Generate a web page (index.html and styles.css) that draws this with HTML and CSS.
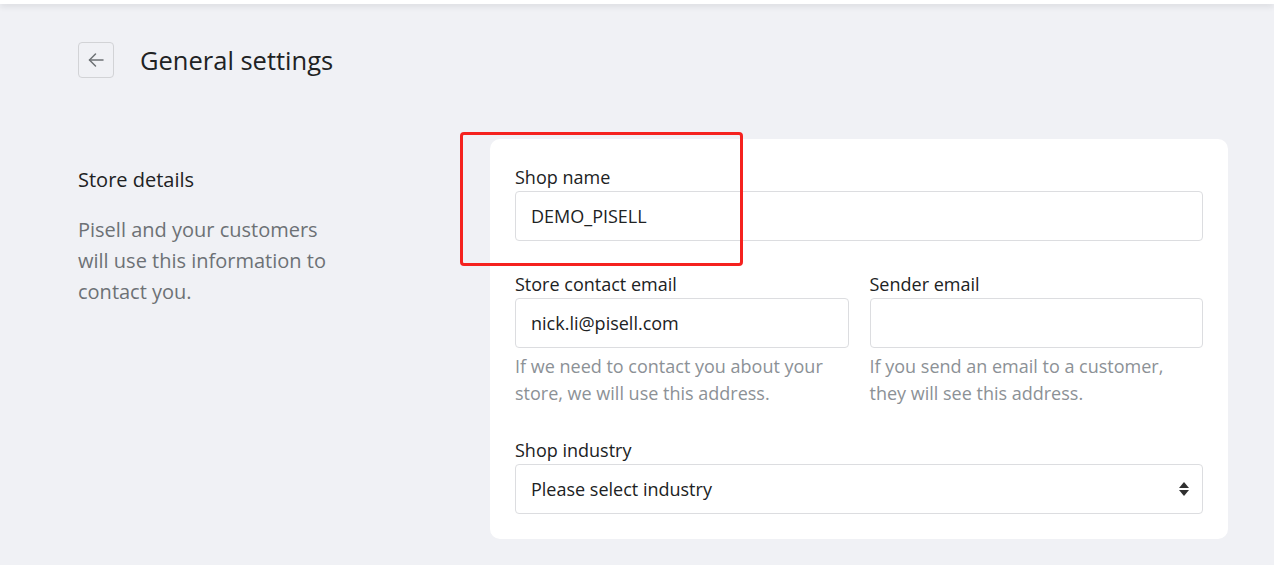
FILE: index.html
```html
<!DOCTYPE html>
<html lang="en">
<head>
    <meta charset="UTF-8">
    <meta name="viewport" content="width=device-width, initial-scale=1.0">
    <title>General settings</title>
    <link rel="stylesheet" href="styles.css">
</head>
<body>
    <div class="topbar"></div>

    <div class="page">
        <div class="page-header">
            <button class="back-btn" aria-label="Back">
                <svg width="20" height="20" viewBox="0 0 20 20" fill="none" stroke="#6d7175" stroke-width="1.5" stroke-linecap="round" stroke-linejoin="round">
                    <path d="M17 10H3.5"/>
                    <path d="M9.5 4L3.5 10l6 6"/>
                </svg>
            </button>
            <h1>General settings</h1>
        </div>

        <div class="section">
            <div class="section-info">
                <h2>Store details</h2>
                <p>Pisell and your customers will use this information to contact you.</p>
            </div>

            <div class="card">
                <div class="field">
                    <label>Shop name</label>
                    <div class="input">DEMO_PISELL</div>
                </div>

                <div class="field-row">
                    <div class="field">
                        <label>Store contact email</label>
                        <div class="input">nick.li@pisell.com</div>
                        <div class="help">If we need to contact you about your store, we will use this address.</div>
                    </div>
                    <div class="field">
                        <label>Sender email</label>
                        <div class="input"></div>
                        <div class="help">If you send an email to a customer, they will see this address.</div>
                    </div>
                </div>

                <div class="field">
                    <label>Shop industry</label>
                    <div class="input select">
                        <span>Please select industry</span>
                        <svg width="12" height="16" viewBox="0 0 12 16" fill="#303030">
                            <path d="M6 1L11 7H1z"/>
                            <path d="M6 15L1 9h10z"/>
                        </svg>
                    </div>
                </div>

                <div class="highlight"></div>
            </div>
        </div>
    </div>
</body>
</html>
```

FILE: styles.css
```css
body {
    margin: 0;
    font-family: "Open Sans", "Noto Sans", Arial, sans-serif;
    background-color: #f0f1f5;
    color: #202223;
}
.topbar {
    height: 4px;
    background-color: #ffffff;
    box-shadow: 0 2px 6px rgba(0, 0, 0, 0.12);
}
.page {
    padding: 38px 46px 0 78px;
}
.page-header {
    display: flex;
    align-items: center;
    gap: 26px;
}
.back-btn {
    width: 36px;
    height: 36px;
    padding: 0;
    border: 1px solid #d2d3d6;
    border-radius: 4px;
    background-color: #f0f1f5;
    display: flex;
    align-items: center;
    justify-content: center;
}
.page-header h1 {
    margin: 0;
    font-size: 25.5px;
    font-weight: 400;
    line-height: 36px;
}
.section {
    display: flex;
    margin-top: 61px;
}
.section-info {
    width: 412px;
    flex-shrink: 0;
    padding-top: 27px;
}
.section-info h2 {
    margin: 0;
    font-size: 20px;
    font-weight: 400;
    line-height: 28px;
}
.section-info p {
    margin: 20px 0 0;
    width: 270px;
    font-size: 20px;
    line-height: 31px;
    color: #6d7175;
}
.card {
    position: relative;
    flex: 1;
    background-color: #ffffff;
    border-radius: 10px;
    padding: 24px 25px 25px;
}
.field label {
    display: block;
    font-size: 18px;
    line-height: 28px;
}
.field-row {
    display: flex;
    gap: 21px;
    margin-top: 29px;
}
.field-row .field {
    flex: 1;
}
.field-row + .field {
    margin-top: 29px;
}
.input {
    height: 48px;
    border: 1px solid #dcdde0;
    border-radius: 4px;
    padding: 0 15px;
    display: flex;
    align-items: center;
    font-size: 18px;
    color: #202223;
}
.select {
    justify-content: space-between;
    padding-right: 12px;
}
.help {
    margin-top: 5px;
    font-size: 18px;
    line-height: 27px;
    color: #8c9196;
}
.highlight {
    position: absolute;
    left: -30px;
    top: -7px;
    width: 277px;
    height: 128px;
    border: 3px solid #f5221f;
    border-radius: 4px;
}
```
